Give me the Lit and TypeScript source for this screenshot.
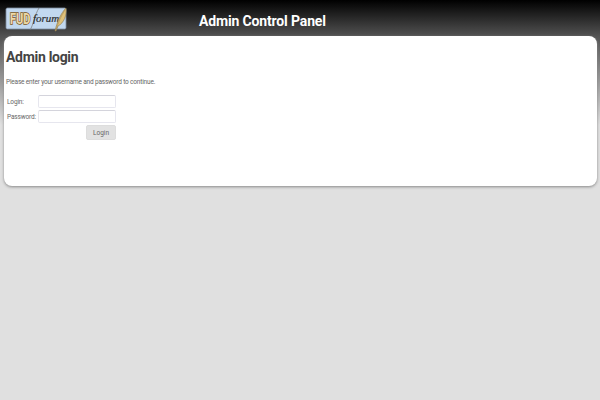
import { LitElement, html, css } from "lit";
import { customElement } from "lit/decorators.js";

@customElement("app-root")
export class AppRoot extends LitElement {
  static styles = css`
    :host {
      display: block;
      min-height: 400px;
      box-sizing: border-box;
      background: #e0e0e0 linear-gradient(#000 0, #525252 36px, #e0e0e0 125px) no-repeat;
      background-size: 100% 125px;
      font-family: Roboto, sans-serif;
      color: #444;
      overflow: hidden;
    }
    .header {
      height: 36px;
      display: flex;
      align-items: flex-start;
      box-sizing: border-box;
      padding: 6px 0 0 5px;
    }
    .logo {
      width: 64px;
      height: 26px;
      display: block;
    }
    .title {
      margin: 6px 0 0 130px;
      font-size: 14px;
      line-height: 18px;
      font-weight: bold;
      letter-spacing: -0.15px;
      color: #fff;
      white-space: nowrap;
    }
    .card {
      height: 150px;
      margin: 0 3px 0 4px;
      box-sizing: border-box;
      padding: 12px 2px 0;
      background: #fff;
      border-radius: 8px;
      box-shadow: 0 1px 3px #888;
    }
    h2 {
      margin: 0;
      font-size: 14px;
      line-height: 19px;
      font-weight: bold;
      letter-spacing: -0.3px;
      color: #444;
    }
    p {
      margin: 10px 0 0;
      font-size: 6.5px;
      line-height: 10px;
      letter-spacing: -0.18px;
      color: #666;
    }
    .form {
      margin: 8px 0 0 1px;
      width: 109px;
      display: grid;
      grid-template-columns: 31px 78px;
      row-gap: 2px;
      align-items: center;
      font-size: 6.5px;
      color: #666;
    }
    label {
      letter-spacing: -0.15px;
    }
    input {
      box-sizing: border-box;
      width: 78px;
      height: 13px;
      margin: 0;
      padding: 0;
      background: #fff;
      border: 1px solid #e6e6ee;
      border-top-color: #d4d4dc;
      border-radius: 2px;
    }
    button {
      grid-column: 1 / -1;
      justify-self: end;
      width: 30px;
      height: 15px;
      margin: 0;
      padding: 0;
      font: inherit;
      color: #666;
      background: #e2e2e2;
      border: 1px solid #ddd;
      border-radius: 2px;
    }
    .fud {
      font-family: Roboto, sans-serif;
      font-weight: bold;
      font-size: 14px;
      fill: #ecd9a8;
      stroke: #7a5520;
      stroke-width: 1.4px;
      paint-order: stroke;
    }
    .forum {
      font-family: "Liberation Serif", serif;
      font-style: italic;
      font-size: 11px;
      fill: #2c2c2c;
      stroke: #2c2c2c;
      stroke-width: 0.2px;
    }
  `;

  render() {
    return html`
      <div class="header">
        <svg class="logo" viewBox="0 0 64 26">
          <rect x="1" y="2" width="60" height="21" rx="1.5" fill="#c2d8ef" stroke="#7e8da0" stroke-width="0.8" />
          <text class="fud" transform="translate(5 18) scale(0.78 1)">FUD</text>
          <path d="M25 24 C28 20 30 8 34 2" stroke="#777" stroke-width="0.7" fill="none" />
          <text class="forum" x="28" y="16">forum</text>
          <path d="M50 25 C52 16 56 7 61 2 C62 9 59 17 53 20 L51 25 Z" fill="#e0c27a" stroke="#8a7548" stroke-width="0.6" />
          <path d="M51 24 C53 17 56 10 60 4" stroke="#8a7548" stroke-width="0.4" fill="none" />
        </svg>
        <div class="title">Admin Control Panel</div>
      </div>
      <div class="card">
        <h2>Admin login</h2>
        <p>Please enter your username and password to continue.</p>
        <div class="form">
          <label>Login:</label>
          <input type="text" />
          <label>Password:</label>
          <input type="password" />
          <button>Login</button>
        </div>
      </div>
    `;
  }
}
